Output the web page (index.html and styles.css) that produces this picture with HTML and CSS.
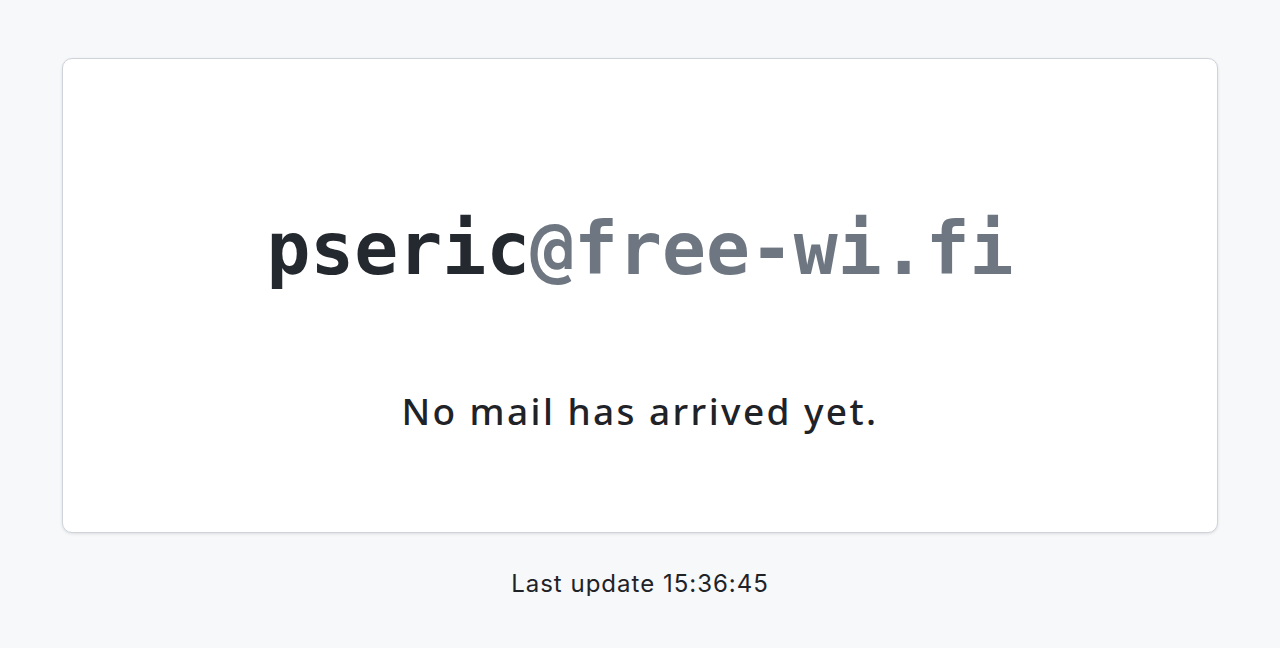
FILE: index.html
```html
<!DOCTYPE html>
<html lang="en">
<head>
<meta charset="utf-8">
<title>Inbox</title>
<link rel="stylesheet" href="styles.css">
</head>
<body>
<main class="page">
  <section class="card">
    <h1 class="address"><span class="user">pseric</span><span class="domain">@free-wi.fi</span></h1>
    <p class="empty">No mail has arrived yet.</p>
  </section>
  <p class="updated">Last update 15:36:45</p>
</main>
</body>
</html>
```
FILE: styles.css
```css
html, body {
  margin: 0;
  padding: 0;
  background: #f6f8fa;
}
.page {
  padding: 58px 62px 0;
  display: flex;
  flex-direction: column;
  align-items: stretch;
}
.card {
  background: #ffffff;
  border: 1px solid #cfd4da;
  border-radius: 10px;
  box-shadow: 0 1px 3px rgba(31, 35, 40, 0.12);
  height: 475px;
  box-sizing: border-box;
  padding-top: 153px;
  display: flex;
  flex-direction: column;
  align-items: center;
}
.address {
  margin: 0;
  font-family: "DejaVu Sans Mono", monospace;
  font-weight: bold;
  font-size: 73px;
  line-height: 1;
  white-space: nowrap;
}
.user { color: #24292f; }
.domain { color: #6e7781; }
.empty {
  margin: 107px 0 0;
  font-family: "Noto Sans", sans-serif;
  font-weight: 500;
  font-size: 37px;
  letter-spacing: 2.4px;
  line-height: 1;
  color: #1f2328;
}
.updated {
  margin: 39px 0 0;
  text-align: center;
  font-family: "Inter", sans-serif;
  font-size: 24px;
  letter-spacing: 1px;
  line-height: 1;
  color: #1f2328;
}
```
